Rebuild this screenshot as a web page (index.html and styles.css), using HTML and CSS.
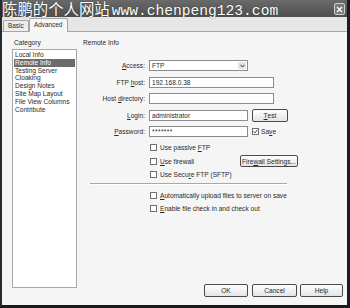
FILE: index.html
```html
<!DOCTYPE html>
<html lang="zh-CN">
<head>
    <meta charset="UTF-8">
    <title>Site Definition</title>
    <link rel="stylesheet" href="styles.css">
</head>
<body>
    <div class="window">
        <div class="titlebar">
            <span class="watermark"><span class="wm-cn">陈鹏的个人网站</span><span class="wm-url">www.chenpeng123.com</span></span>
            <span class="close">
                <svg width="7" height="7" viewBox="0 0 7 7"><path d="M1 1L6 6M6 1L1 6" stroke="#fff" stroke-width="1.3"/></svg>
            </span>
        </div>
        <div class="tabs">
            <div class="tab">Basic</div>
            <div class="tab active">Advanced</div>
        </div>
        <div class="panel">
            <div class="categories">
                <div class="caption">Category</div>
                <ul class="listbox">
                    <li>Local Info</li>
                    <li class="selected">Remote Info</li>
                    <li>Testing Server</li>
                    <li>Cloaking</li>
                    <li>Design Notes</li>
                    <li>Site Map Layout</li>
                    <li>File View Columns</li>
                    <li>Contribute</li>
                </ul>
            </div>
            <div class="details">
                <div class="caption">Remote Info</div>
                <div class="form">
                    <label><u>A</u>ccess:</label>
                    <div class="ctrl">
                        <div class="select">FTP<span class="arrow"><svg width="5" height="4" viewBox="0 0 5 4"><path d="M0.5 0.8L2.5 3L4.5 0.8" fill="none" stroke="#333" stroke-width="1"/></svg></span></div>
                    </div>
                    <label>FTP <u>h</u>ost:</label>
                    <div class="ctrl"><div class="input wide">192.168.0.38</div></div>
                    <label>Host <u>d</u>irectory:</label>
                    <div class="ctrl"><div class="input wide"></div></div>
                    <label><u>L</u>ogin:</label>
                    <div class="ctrl">
                        <div class="input">administrator</div>
                        <span class="btn test"><u>T</u>est</span>
                    </div>
                    <label><u>P</u>assword:</label>
                    <div class="ctrl">
                        <div class="input pw">*******</div>
                        <span class="check checked save"><svg width="5" height="5" viewBox="0 0 5 5"><path d="M0.6 2.4L2 3.9L4.4 0.8" fill="none" stroke="#333" stroke-width="0.9"/></svg></span>
                        <span>Sa<u>v</u>e</span>
                    </div>
                </div>
                <div class="options">
                    <div class="option"><span class="check"></span><span>Use passive <u>F</u>TP</span></div>
                    <div class="option fw"><span class="check"></span><span><u>U</u>se firewall</span><span class="btn settings">Fire<u>w</u>all Settings...</span></div>
                    <div class="option"><span class="check"></span><span>Use Secu<u>r</u>e FTP (SFTP)</span></div>
                </div>
                <div class="sep"></div>
                <div class="options">
                    <div class="option"><span class="check"></span><span><u>A</u>utomatically upload files to server on save</span></div>
                    <div class="option"><span class="check"></span><span><u>E</u>nable file check in and check out</span></div>
                </div>
                <div class="footer">
                    <span class="btn ok">OK</span>
                    <span class="btn cancel">Cancel</span>
                    <span class="btn help">Help</span>
                </div>
            </div>
        </div>
    </div>
</body>
</html>
```

FILE: styles.css
```css
* { box-sizing: border-box; }
body { margin: 0; background: #fff; font-family: "Liberation Sans", Arial, sans-serif; font-size: 6.6px; color: #2a2a2a; }
u { text-decoration-thickness: 0.6px; text-underline-offset: 0.8px; }

.window { width: 350px; height: 308px; display: flex; flex-direction: column; background: #ececec; border-left: 2px solid #2a2a2a; border-right: 3px solid #1c1c1c; border-bottom: 3px solid #1c1c1c; }

.titlebar { position: relative; height: 17px; flex: none; background: linear-gradient(#6a6a6a, #4e4e4e); }
.watermark { position: absolute; left: 0; top: 0; display: flex; align-items: baseline; height: 17px; line-height: 17px; color: #fff; text-shadow: 0 0 1px #222; white-space: nowrap; }
.wm-cn { font-family: "Noto Sans CJK SC", sans-serif; font-size: 15.4px; }
.wm-url { font-family: "Liberation Mono", monospace; font-size: 14.6px; margin-left: 2px; }
.close { position: absolute; right: 2px; top: 3px; width: 11px; height: 12px; display: flex; align-items: center; justify-content: center; border: 1px solid #cfcfcf; border-radius: 2px; background: #7a7a7a; }

.tabs { height: 15px; flex: none; display: flex; align-items: flex-end; padding-left: 1px; border-bottom: 1px solid #a5a5a5; background: #e6e6e6; }
.tab { height: 11px; width: 26px; line-height: 10px; padding-left: 4px; border: 1px solid #a5a5a5; border-bottom: none; border-radius: 2px 2px 0 0; background: #ececec; font-size: 6.4px; }
.tab.active { height: 14px; width: 39px; margin-bottom: -1px; line-height: 12px; padding-left: 4px; background: #f6f6f6; }

.panel { flex: 1; display: flex; padding: 7px 4px 8px 10px; background: #f5f5f5; }
.caption { height: 8px; line-height: 8px; }

.categories { width: 65px; flex: none; }
.categories .caption { padding-left: 2px; }
.listbox { list-style: none; margin: 2px 0 0; padding: 1px 1px; height: 239px; background: #fff; border: 1px solid #a8a8a8; }
.listbox li { height: 7.8px; line-height: 7.8px; padding-left: 1px; white-space: nowrap; }
.listbox li.selected { background: #6c6c6c; color: #fff; }

.details { flex: 1; margin-left: 6px; display: flex; flex-direction: column; }
.form { margin-top: 13px; display: grid; grid-template-columns: 62px auto; column-gap: 4px; row-gap: 5.5px; grid-auto-rows: 11px; }
.form label { text-align: right; line-height: 11px; white-space: nowrap; }
.ctrl { display: flex; align-items: center; gap: 2px; }
.input { width: 99px; height: 11px; line-height: 9px; padding-left: 2px; background: #fff; border: 1px solid #8c8c8c; }
.input.wide { width: 125px; }
.input.pw { letter-spacing: 0.4px; }
.select { position: relative; width: 99px; height: 11px; line-height: 9px; padding-left: 2px; background: #fff; border: 1px solid #8c8c8c; }
.select .arrow { position: absolute; right: 1px; top: 1px; width: 8px; height: 7px; display: flex; align-items: center; justify-content: center; background: #e4e4e4; border-radius: 1px; }

.btn { display: inline-flex; align-items: center; justify-content: center; height: 13px; border: 1px solid #4a4a4a; border-radius: 2px; background: linear-gradient(#fefefe, #e4e4e4); white-space: nowrap; }
.btn.test { width: 36px; margin-left: 2px; }

.check { width: 7px; height: 7px; flex: none; display: inline-flex; align-items: center; justify-content: center; background: #fff; border: 1px solid #6e6e6e; }
.check.save { margin-left: 2px; }

.options { padding-left: 67px; }
.form + .options { margin-top: 4px; }
.option { height: 13.5px; display: flex; align-items: center; gap: 3px; white-space: nowrap; }
.option.fw { width: 148px; }
.btn.settings { margin-left: auto; width: 58px; height: 12px; }
.sep { margin: 1.5px 0 4px 7px; width: 197px; border-top: 1px solid #a9a9a9; border-bottom: 1px solid #fff; }
.sep + .options .option { height: 13px; }

.footer { margin-top: auto; display: flex; justify-content: flex-end; gap: 4px; }
.btn.ok { width: 44px; }
.btn.cancel { width: 45px; }
.btn.help { width: 43px; margin-left: -1px; }
```
